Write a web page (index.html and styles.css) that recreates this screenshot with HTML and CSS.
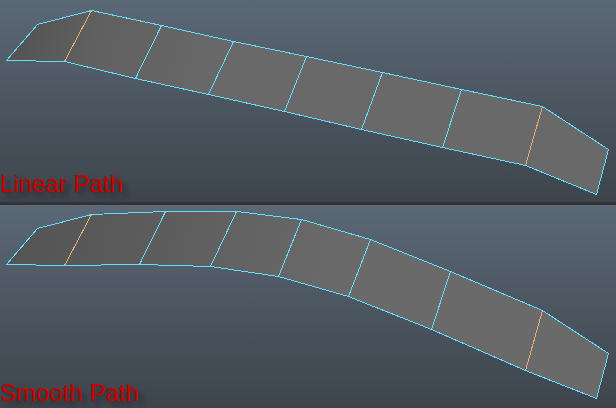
FILE: index.html
```html
<!DOCTYPE html>
<html lang="en">
<head>
<meta charset="utf-8">
<title>Linear Path and Smooth Path</title>
<link rel="stylesheet" href="styles.css">
</head>
<body>
<main class="comparison">
  <figure class="viewport viewport-linear">
    <svg class="mesh" viewBox="0 0 616 202" aria-hidden="true">
      <defs>
        <linearGradient id="linear-shade" gradientUnits="userSpaceOnUse" x1="20" y1="20" x2="220" y2="90">
          <stop offset="0" stop-color="#535353"/>
          <stop offset="0.35" stop-color="#606060"/>
          <stop offset="1" stop-color="#696969"/>
        </linearGradient>
      </defs>
      <g transform="translate(.5 .5)">
        <polygon fill="url(#linear-shade)" points="6,60 37,24 91,10 161,25 233,41 306,56 382,72 461,89 542,106 608,149 596,194 525,165 442,147 361,129 284,111 208,94 135,78 64,61"/>
        <path class="seam" d="M91 10L64 61M542 106L525 165"/>
        <path class="edge" d="M6 60L37 24L91 10L161 25L233 41L306 56L382 72L461 89L542 106L608 149L596 194L525 165L442 147L361 129L284 111L208 94L135 78L64 61ZM161 25L135 78M233 41L208 94M306 56L284 111M382 72L361 129M461 89L442 147"/>
      </g>
    </svg>
    <figcaption class="label">Linear Path</figcaption>
  </figure>
  <figure class="viewport viewport-smooth">
    <svg class="mesh" viewBox="0 0 616 203" aria-hidden="true">
      <defs>
        <linearGradient id="smooth-shade" gradientUnits="userSpaceOnUse" x1="20" y1="10" x2="330" y2="90">
          <stop offset="0" stop-color="#545454"/>
          <stop offset="0.5" stop-color="#5e5e5e"/>
          <stop offset="1" stop-color="#6a6a6a"/>
        </linearGradient>
      </defs>
      <g transform="translate(.5 .5)">
        <polygon fill="url(#smooth-shade)" points="6,59 37,23 91,9 165,6 236,6 301,14 370,34 450,66 542,105 608,148 596,193 525,165 431,124 348,91 278,71 210,61 139,59 64,60"/>
        <path class="seam" d="M91 9L64 60M542 105L525 165"/>
        <path class="edge" d="M6 59L37 23L91 9L165 6L236 6L301 14L370 34L450 66L542 105L608 148L596 193L525 165L431 124L348 91L278 71L210 61L139 59L64 60ZM165 6L139 59M236 6L210 61M301 14L278 71M370 34L348 91M450 66L431 124"/>
      </g>
    </svg>
    <figcaption class="label">Smooth Path</figcaption>
  </figure>
</main>
</body>
</html>
```
FILE: styles.css
```css
body {
  margin: 0;
  background: #333;
  font-family: "Liberation Sans", Arial, sans-serif;
}

.comparison {
  display: grid;
  gap: 3px;
}

.viewport {
  position: relative;
  margin: 0;
  overflow: hidden;
  background: linear-gradient(#5b6876, #3d444c);
}

.mesh {
  display: block;
  width: 100%;
  height: auto;
  shape-rendering: crispEdges;
}

.edge,
.seam {
  fill: none;
  stroke: #62dcff;
  stroke-width: 1;
}

.seam {
  stroke: #e6ad78;
}

.label {
  position: absolute;
  left: 0;
  bottom: 4px;
  color: #c80000;
  font-size: 24px;
  line-height: 28px;
  text-shadow: 1px 1px 1px #4a3030, 5px 5px 4px #2d3238;
}

.viewport-smooth .label {
  bottom: 1px;
}
```
